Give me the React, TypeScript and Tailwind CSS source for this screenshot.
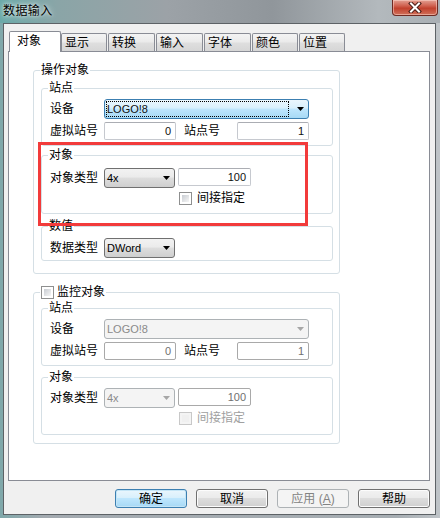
import React from "react";

type Variant = "normal" | "focus" | "disabled";

function Arrow({ disabled }: { disabled?: boolean }) {
  return (
    <svg width="7" height="4" viewBox="0 0 7 4" className="shrink-0">
      <path d="M0 0H7L3.5 4Z" fill={disabled ? "#a6a6a6" : "#000"} />
    </svg>
  );
}

function Combo({ wClass, text, variant }: { wClass: string; text: string; variant: Variant }) {
  const v =
    variant === "focus"
      ? "border-[#3c7fb1] bg-[linear-gradient(#eaf6fd,#d9f0fc_45%,#bee6fd_50%,#a7d9f5)]"
      : variant === "disabled"
      ? "border-[#adb2b5] bg-[#f4f4f4] text-[#8a8a8a]"
      : "border-[#707070] bg-[linear-gradient(#f2f2f2,#ebebeb_45%,#dddddd_50%,#cfcfcf)]";
  return (
    <div className={`${wClass} h-[20px] shrink-0 flex items-center rounded-[3px] border ${v} pr-[4px] text-[11px] leading-[14px]`}>
      {variant === "focus" ? (
        <div className="ml-[1px] flex-1 h-[16px] border border-dotted border-black flex items-center text-[#111]">
          {text}
        </div>
      ) : (
        <div className="pl-[2px] flex-1">{text}</div>
      )}
      <div className={variant === "focus" ? "ml-[8px]" : ""}>
        <Arrow disabled={variant === "disabled"} />
      </div>
    </div>
  );
}

function Input({ wClass, value, disabled }: { wClass: string; value: string; disabled?: boolean }) {
  return (
    <div
      className={`${wClass} h-[18px] shrink-0 rounded-[2px] border ${
        disabled ? "border-[#a9a9a9] text-[#707070]" : "border-[#c6c9cf] border-t-[#abadb3] text-[#111]"
      } bg-white flex items-center justify-end pr-[4px] text-[11px] leading-[14px]`}
    >
      {value}
    </div>
  );
}

function Check({ disabled }: { disabled?: boolean }) {
  return (
    <div
      className={`w-[13px] h-[13px] shrink-0 border p-[2px] ${
        disabled ? "border-[#c8c8c8] bg-[#f4f4f4]" : "border-[#8e8f8f] bg-white"
      }`}
    >
      <div
        className={`w-full h-full ${
          disabled ? "bg-[#f0f0f0]" : "bg-[linear-gradient(135deg,#c8ccd2,#f6f6f6)]"
        }`}
      />
    </div>
  );
}

function Group({
  legend,
  className,
  children,
}: {
  legend: React.ReactNode;
  className: string;
  children: React.ReactNode;
}) {
  return (
    <div className={`relative border border-[#d5dfe5] rounded-[3px] flex flex-col ${className}`}>
      <div className="absolute left-[6px] -top-[8px] h-[14px] px-[1px] bg-white text-[12px] leading-[14px] flex items-center">
        {legend}
      </div>
      {children}
    </div>
  );
}

function Label({ children, wClass, gray }: { children: React.ReactNode; wClass: string; gray?: boolean }) {
  return (
    <div className={`${wClass} shrink-0 h-[18px] flex items-center text-[12px] leading-[14px] ${gray ? "text-[#a0a0a0]" : ""}`}>
      {children}
    </div>
  );
}

function StationGroup({ disabled, className }: { disabled?: boolean; className: string }) {
  return (
    <Group legend="站点" className={className}>
      <div className="flex items-center">
        <div className="w-[54px] shrink-0 text-[12px] leading-[14px]">设备</div>
        <Combo wClass="w-[205px]" text="LOGO!8" variant={disabled ? "disabled" : "focus"} />
      </div>
      <div className="flex items-center mt-[3px]">
        <Label wClass="w-[54px]">虚拟站号</Label>
        <Input wClass="w-[72px]" value="0" disabled={disabled} />
        <Label wClass="w-[53px] ml-[8px]">站点号</Label>
        <Input wClass="w-[72px]" value="1" disabled={disabled} />
      </div>
    </Group>
  );
}

function ObjectGroup({ disabled, className }: { disabled?: boolean; className: string }) {
  return (
    <Group legend="对象" className={className}>
      <div className="flex items-start">
        <div className="w-[54px] shrink-0 h-[20px] flex items-center text-[12px] leading-[14px]">对象类型</div>
        <Combo wClass="w-[71px]" text="4x" variant={disabled ? "disabled" : "normal"} />
        <div className="ml-[3px]">
          <Input wClass="w-[73px]" value="100" disabled={disabled} />
        </div>
      </div>
      <div className="flex items-center mt-[4px] ml-[129px] h-[13px]">
        <Check disabled={disabled} />
        <div className={`ml-[5px] text-[12px] leading-[13px] ${disabled ? "text-[#a0a0a0]" : ""}`}>间接指定</div>
      </div>
    </Group>
  );
}

function Button({ children, variant }: { children: React.ReactNode; variant: Variant }) {
  const v =
    variant === "focus"
      ? "border-[#3c7fb1] bg-[linear-gradient(#eaf6fd,#d9f0fc_45%,#bee6fd_50%,#a7d9f5)] shadow-[inset_0_0_0_1px_#c4e5f6]"
      : variant === "disabled"
      ? "border-[#adb2b5] bg-[#f4f4f4] text-[#838383]"
      : "border-[#707070] bg-[linear-gradient(#f2f2f2,#ebebeb_45%,#dddddd_50%,#cfcfcf)] shadow-[inset_0_0_0_1px_#fcfcfc]";
  return (
    <div className={`w-[72px] h-[19px] rounded-[3px] border ${v} flex items-center justify-center text-[12px] leading-[14px]`}>
      {children}
    </div>
  );
}

export default function App() {
  const tabs = [
    { t: "显示", w: "w-[46px]" },
    { t: "转换", w: "w-[47px]" },
    { t: "输入", w: "w-[47px]" },
    { t: "字体", w: "w-[47px]" },
    { t: "颜色", w: "w-[46px]" },
    { t: "位置", w: "w-[46px]" },
  ];
  return (
    <div className="w-[440px] h-[518px] flex flex-col overflow-hidden bg-[linear-gradient(90deg,#7fa8aa,#a3aab0_10%,#a6adb2_90%,#bfc4c8)] font-['Liberation_Sans','Noto_Sans_CJK_SC',sans-serif] text-black select-none">
      {/* title bar */}
      <div className="h-[23px] shrink-0 flex items-start justify-between bg-[linear-gradient(90deg,#6aa9a8_0%,#8aa5a7_13%,#9ca2a7_38%,#90969b_62%,#b3b9bd_86%,#a9afb4_100%)]">
        <div className="pl-[3px] pt-[3px] text-[12px] leading-[16px] tracking-[0.4px] [text-shadow:0_0_6px_rgba(255,255,255,0.95),0_0_3px_rgba(255,255,255,0.7)]">
          数据输入
        </div>
        <div className="mr-[2px] w-[46px] h-[16px] rounded-b-[4px] border border-t-0 border-[#6e2a22] bg-[linear-gradient(#e3a092,#cf5f4d_40%,#c1412d_55%,#d0705a)] shadow-[inset_0_0_0_1px_rgba(255,220,210,0.5)] flex items-center justify-center">
          <svg width="14" height="11" viewBox="0 0 14 11">
            <path d="M3 1.5L11 9.5M11 1.5L3 9.5" stroke="#4a1d17" strokeWidth="4" strokeLinecap="square" />
            <path d="M3 1.5L11 9.5M11 1.5L3 9.5" stroke="#ffffff" strokeWidth="2" strokeLinecap="square" />
          </svg>
        </div>
      </div>

      {/* client area */}
      <div className="ml-[3px] mr-[4px] h-[492px] shrink-0 border border-[#5d6266] bg-[#f0f0f0] flex flex-col">
        {/* tabs */}
        <div className="mt-[7px] ml-[5px] h-[20px] flex items-end">
          <div className="relative z-10 w-[52px] h-[21px] -mb-[1px] rounded-t-[2px] border border-b-0 border-[#898c95] bg-white pl-[7px] pt-[1px] text-[12px] leading-[16px]">
            对象
          </div>
          <div className="flex items-end gap-[1px]">
            {tabs.map((tab) => (
              <div
                key={tab.t}
                className={`${tab.w} h-[18px] rounded-t-[2px] border border-b-0 border-[#898c95] bg-[linear-gradient(#f3f3f3,#ebebeb_45%,#dedede_55%,#d6d6d6)] pl-[3px] pt-[1px] text-[12px] leading-[16px]`}
              >
                {tab.t}
              </div>
            ))}
          </div>
        </div>

        {/* tab panel */}
        <div className="relative ml-[4px] w-[422px] h-[430px] shrink-0 border border-[#898c95] bg-white flex flex-col">
          <Group legend="操作对象" className="ml-[24px] mt-[18px] w-[307px] pt-[17px] pl-[7px] pr-[6px] pb-[12px]">
            <StationGroup className="pt-[10px] pb-[5px] pl-[8px]" />
            <ObjectGroup className="mt-[9px] pt-[12px] pb-[8px] pl-[8px]" />
            <Group legend="数值" className="mt-[12px] pt-[11px] pb-[2px] pl-[8px]">
              <div className="flex items-center">
                <div className="w-[54px] shrink-0 text-[12px] leading-[14px]">数据类型</div>
                <Combo wClass="w-[71px]" text="DWord" variant="normal" />
              </div>
            </Group>
          </Group>

          <Group
            legend={
              <div className="flex items-center">
                <Check />
                <span className="ml-[3px]">监控对象</span>
              </div>
            }
            className="ml-[24px] mt-[18px] w-[307px] pt-[15px] pl-[7px] pr-[6px] pb-[8px]"
          >
            <StationGroup disabled className="pt-[10px] pb-[5px] pl-[8px]" />
            <ObjectGroup disabled className="mt-[11px] pt-[10px] pb-[9px] pl-[8px]" />
          </Group>

          {/* red highlight rectangle */}
          <div className="absolute left-[29px] top-[90px] w-[270px] h-[84px] border-[3px] border-[#f23b3b] pointer-events-none" />
        </div>

        {/* buttons */}
        <div className="mt-[8px] h-[19px] flex justify-end gap-[9px] pr-[5px]">
          <Button variant="focus">确定</Button>
          <Button variant="normal">取消</Button>
          <Button variant="disabled">
            <span>
              应用 (<span className="underline">A</span>)
            </span>
          </Button>
          <Button variant="normal">帮助</Button>
        </div>
      </div>
    </div>
  );
}
